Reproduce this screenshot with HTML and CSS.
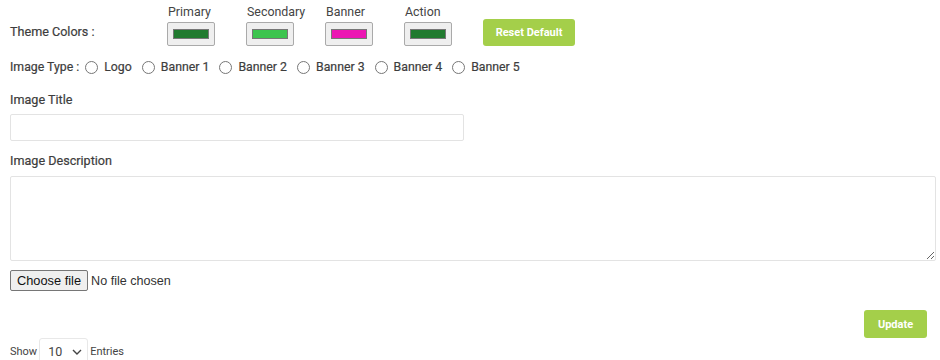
FILE: index.html
```html
<!DOCTYPE html>
<html lang="en">
<head>
  <meta charset="UTF-8" />
  <meta name="viewport" content="width=device-width, initial-scale=1.0" />
  <title>Theme Settings</title>
  <link rel="stylesheet" href="styles.css">
</head>
<body>
  <div class="settings">
    <!-- Theme colours -->
    <div class="theme-row">
      <span class="row-label">Theme Colors :</span>
      <div class="swatches">
        <label class="swatch">
          <span>Primary</span>
          <input type="color" value="#217a2f">
        </label>
        <label class="swatch">
          <span>Secondary</span>
          <input type="color" value="#3cc44e">
        </label>
        <label class="swatch">
          <span>Banner</span>
          <input type="color" value="#ec16b3">
        </label>
        <label class="swatch">
          <span>Action</span>
          <input type="color" value="#217a2f">
        </label>
      </div>
      <button class="btn reset-btn">Reset Default</button>
    </div>

    <!-- Image type -->
    <div class="type-row">
      <span class="row-label">Image Type :</span>
      <label class="radio"><input type="radio" name="imgtype">Logo</label>
      <label class="radio"><input type="radio" name="imgtype">Banner 1</label>
      <label class="radio"><input type="radio" name="imgtype">Banner 2</label>
      <label class="radio"><input type="radio" name="imgtype">Banner 3</label>
      <label class="radio"><input type="radio" name="imgtype">Banner 4</label>
      <label class="radio"><input type="radio" name="imgtype">Banner 5</label>
    </div>

    <label class="field-label title-label">Image Title</label>
    <input type="text" class="title-input">

    <label class="field-label desc-label">Image Description</label>
    <textarea class="desc-input"></textarea>

    <!-- File picker -->
    <div class="file-row">
      <button class="file-btn">Choose file</button>
      <span class="file-name">No file chosen</span>
    </div>

    <div class="actions">
      <button class="btn update-btn">Update</button>
    </div>

    <div class="entries">
      <span>Show</span>
      <div class="select-wrap">
        <select class="entries-select">
          <option>10</option>
          <option>25</option>
          <option>50</option>
        </select>
        <svg class="chevron" width="10" height="6" viewBox="0 0 10 6">
          <path d="M1 1l4 4 4-4" fill="none" stroke="#444" stroke-width="1.4"/>
        </svg>
      </div>
      <span>Entries</span>
    </div>
  </div>
</body>
</html>
```

FILE: styles.css
```css
body {
  font-family: Roboto, Arial, sans-serif;
  font-size: 12.6px;
  color: #3d3d3d;
  background: #fff;
  margin: 0;
  padding: 0;
}
.settings {
  padding: 0 4px 0 10px;
  display: flex;
  flex-direction: column;
  align-items: flex-start;
}
.row-label {
  line-height: 16px;
  white-space: nowrap;
  -webkit-text-stroke: 0.2px #3d3d3d;
}
.theme-row {
  display: flex;
  align-items: flex-end;
  padding-top: 4px;
}
.theme-row .row-label {
  width: 157px;
  padding-bottom: 6px;
}
.swatches {
  display: flex;
}
.swatch {
  display: flex;
  flex-direction: column;
  align-items: flex-start;
  width: 79px;
}
.swatch span {
  color: #444;
  font-size: 12.4px;
  line-height: 16px;
  margin: 0 0 2px 1px;
  white-space: nowrap;
}
.swatch input {
  width: 48px;
  height: 24px;
  margin: 0;
  padding: 2px 3px;
  border: 1px solid #aaa;
  border-radius: 2px;
  background: #efefef;
  cursor: pointer;
}
.btn {
  font-family: Roboto, Arial, sans-serif;
  background: #a4cf4a;
  color: #fff;
  border: none;
  border-radius: 3px;
  font-weight: 700;
  font-size: 11px;
  cursor: pointer;
}
.reset-btn {
  width: 92px;
  height: 27px;
}
.type-row {
  display: flex;
  align-items: center;
  margin-top: 11px;
  height: 20px;
  font-size: 12.3px;
}
.type-row .row-label {
  margin-right: 6px;
}
.radio {
  display: flex;
  align-items: center;
  margin-right: 10px;
  white-space: nowrap;
  -webkit-text-stroke: 0.2px #3d3d3d;
}
.radio input {
  width: 13px;
  height: 13px;
  margin: 0 6px 0 0;
}
.field-label {
  line-height: 16px;
  -webkit-text-stroke: 0.2px #3d3d3d;
}
.title-label {
  margin-top: 15px;
}
.title-input {
  margin-top: 6px;
  width: 454px;
  height: 27px;
  box-sizing: border-box;
  border: 1px solid #e3e3e3;
  border-radius: 2px;
}
.desc-label {
  margin-top: 12px;
}
.desc-input {
  align-self: stretch;
  margin-top: 7px;
  height: 85px;
  box-sizing: border-box;
  border: 1px solid #e3e3e3;
  border-radius: 2px;
  resize: vertical;
}
.file-row {
  display: flex;
  align-items: center;
  margin-top: 9px;
  gap: 3px;
}
.file-btn {
  font-family: "Liberation Sans", Arial, sans-serif;
  font-size: 12.8px;
  color: #111;
  background: #efefef;
  border: 1px solid #767676;
  border-radius: 2px;
  padding: 1px 6px;
  height: 21px;
  white-space: nowrap;
}
.file-name {
  font-family: "Liberation Sans", Arial, sans-serif;
  font-size: 12.6px;
  color: #333;
}
.actions {
  align-self: stretch;
  display: flex;
  justify-content: flex-end;
  padding-right: 9px;
  margin-top: 19px;
}
.update-btn {
  width: 63px;
  height: 28px;
}
.entries {
  display: flex;
  align-items: center;
  gap: 2px;
  font-size: 11px;
  color: #444;
}
.select-wrap {
  position: relative;
}
.entries-select {
  appearance: none;
  width: 49px;
  height: 26px;
  border: 1px solid #e8e8e8;
  border-radius: 3px;
  background: #fff;
  font-family: Roboto, Arial, sans-serif;
  font-size: 12.5px;
  color: #444;
  padding-left: 8px;
}
.chevron {
  position: absolute;
  right: 6px;
  top: 11px;
  pointer-events: none;
}
```
